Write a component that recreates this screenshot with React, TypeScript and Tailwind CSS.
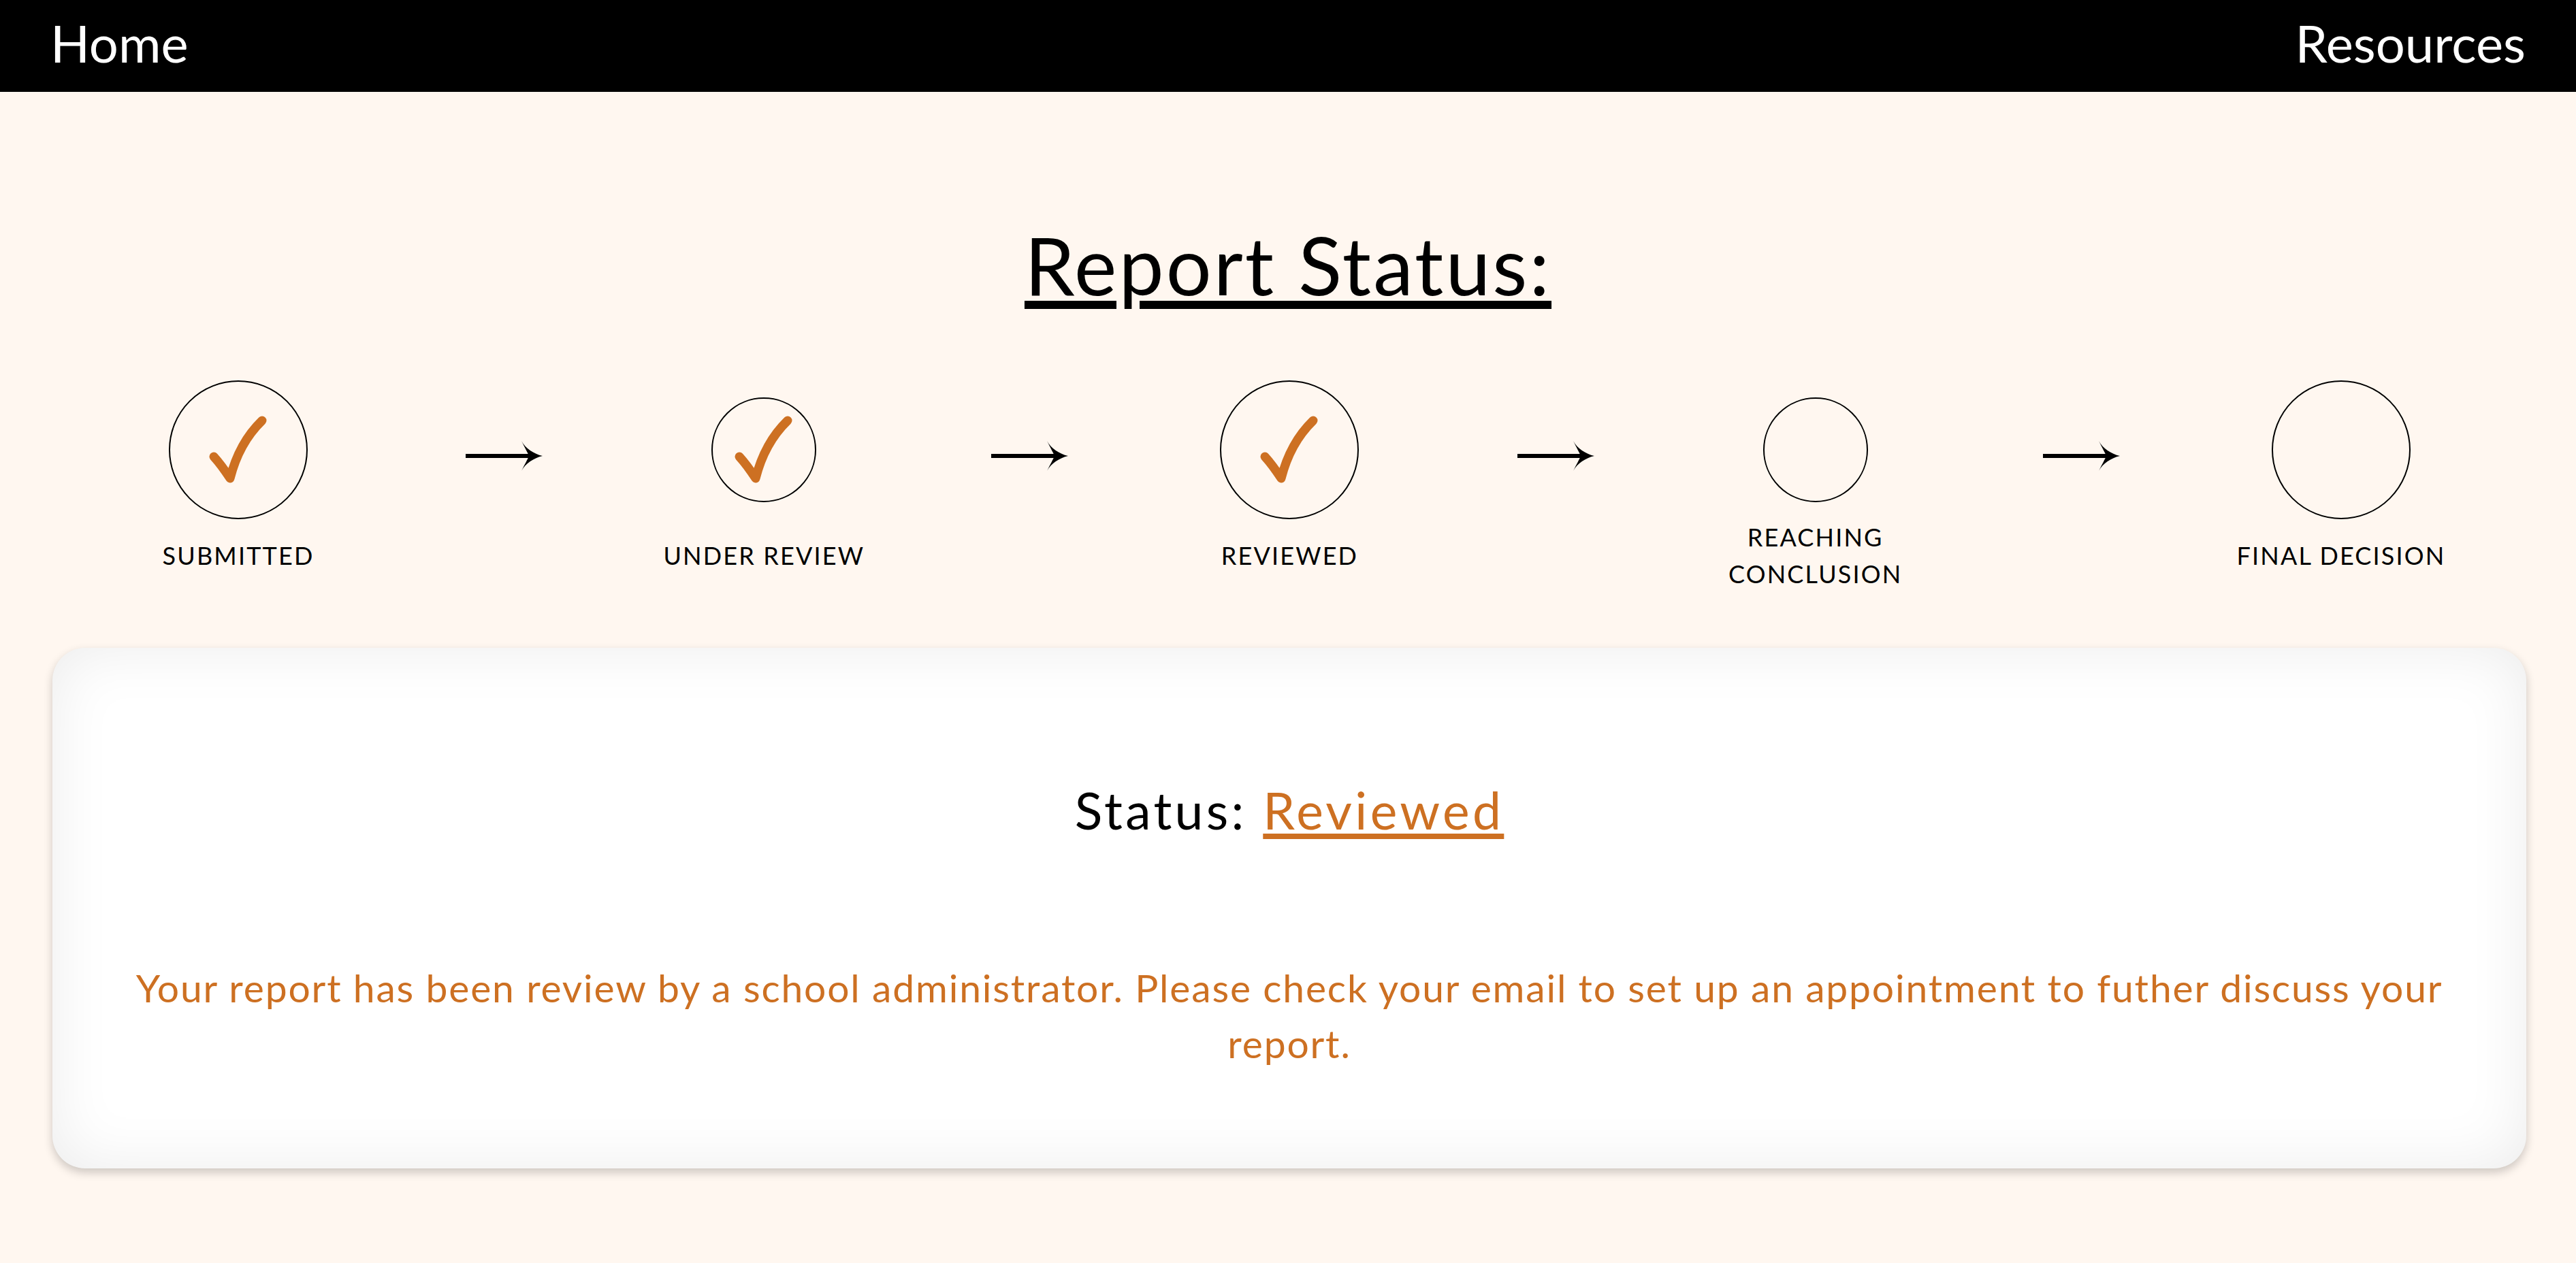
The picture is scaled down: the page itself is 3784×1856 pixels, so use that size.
import React from 'react';

type Step = {
  label: string[];
  done: boolean;
  size: 'lg' | 'sm';
};

const steps: Step[] = [
  { label: ['SUBMITTED'], done: true, size: 'lg' },
  { label: ['UNDER REVIEW'], done: true, size: 'sm' },
  { label: ['REVIEWED'], done: true, size: 'lg' },
  { label: ['REACHING', 'CONCLUSION'], done: false, size: 'sm' },
  { label: ['FINAL DECISION'], done: false, size: 'lg' },
];

const Check = () => (
  <svg width="90" height="100" viewBox="0 0 90 100" fill="none">
    <path
      d="M9 60 Q20 72 33 92 Q46 40 80 7"
      stroke="#cd7022"
      strokeWidth="13"
      strokeLinecap="round"
      strokeLinejoin="round"
    />
  </svg>
);

const Arrow = () => (
  <svg width="114" height="46" viewBox="0 0 114 46">
    <rect x="0" y="20" width="100" height="6" fill="#000" />
    <path d="M82 1 C88 12 100 20 113 23 C100 26 88 34 82 45 C87 35 91 28 93 23 C91 18 87 11 82 1 Z" fill="#000" />
  </svg>
);

const StepItem: React.FC<{ step: Step }> = ({ step }) => (
  <div className="flex flex-col items-center">
    <div className="h-[204px] flex items-center justify-center">
      <div
        className={`${step.size === 'lg' ? 'w-[204px] h-[204px]' : 'w-[154px] h-[154px]'} rounded-full border-[2px] border-black flex items-center justify-center`}
      >
        {step.done && <Check />}
      </div>
    </div>
    <div className="h-[106px] flex flex-col items-center justify-center text-[36px] leading-[54px] tracking-[0.06em] text-black text-center whitespace-nowrap">
      {step.label.map((l) => (
        <span key={l}>{l}</span>
      ))}
    </div>
  </div>
);

export default function App() {
  return (
    <div className="min-h-screen bg-[#fff7f0] font-['Lato',sans-serif]">
      <nav className="h-[135px] bg-black flex items-center justify-between px-[74px] pb-[10px] text-white text-[76px] leading-[1.2]">
        <a href="#">Home</a>
        <a href="#">Resources</a>
      </nav>

      <main>
        <h1 className="mt-[183px] text-center text-[118px] leading-[1.2] tracking-[0.026em] text-black underline decoration-[12px] underline-offset-[8px]">
          Report Status:
        </h1>

        <div className="mt-[99px] pl-[157px] pr-[152px] grid grid-cols-9">
          {steps.map((step, i) => (
            <React.Fragment key={i}>
              <StepItem step={step} />
              {i < steps.length - 1 && (
                <div className="h-[204px] flex items-center justify-center pt-[18px] pl-[10px]">
                  <Arrow />
                </div>
              )}
            </React.Fragment>
          ))}
        </div>

        <div className="ml-[77px] mr-[73px] mt-[83px] h-[765px] rounded-[48px] bg-white shadow-[0_6px_14px_rgba(0,0,0,0.2),inset_0_0_90px_rgba(0,0,0,0.08)] px-[105px] pt-[193px] text-center">
          <h2 className="text-[75px] leading-[1.2] tracking-[0.058em] text-black">
            Status:{' '}
            <span className="text-[#cd7022] underline decoration-[8px] underline-offset-[6px]">Reviewed</span>
          </h2>
          <p className="mt-[175px] text-[57px] leading-[82px] tracking-[0.032em] text-[#cd7022]">
            Your report has been review by a school administrator. Please check your email to set up an appointment to futher discuss your report.
          </p>
        </div>
      </main>
    </div>
  );
}
